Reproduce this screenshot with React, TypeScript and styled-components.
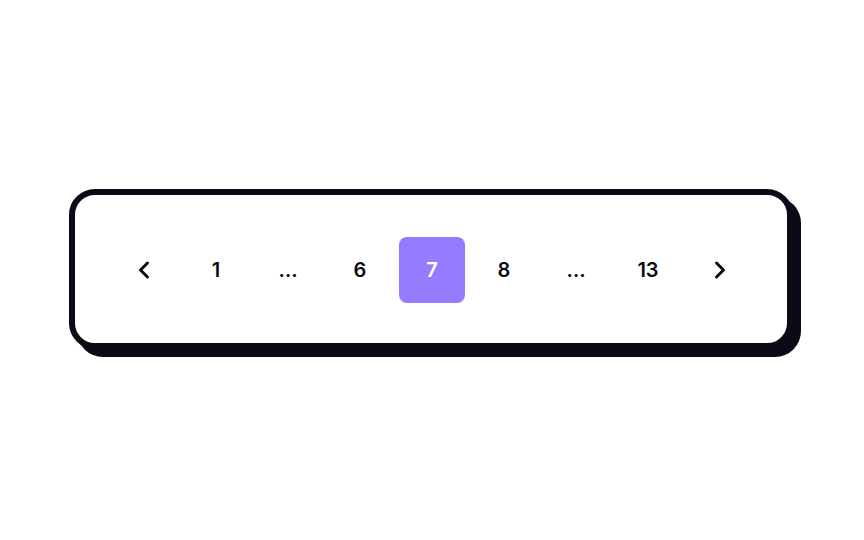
import styled, { createGlobalStyle } from "styled-components";

const GlobalStyle = createGlobalStyle`
    html, body {
        margin: 0;
        padding: 0;
        background: #ffffff;
    }
    body {
        font-family: Inter, "Noto Sans", sans-serif;
    }
`;

const Page = styled.div`
    width: 864px;
    height: 540px;
    display: flex;
    align-items: center;
    justify-content: center;
    padding-bottom: 2px;
    box-sizing: border-box;
`;

const Card = styled.nav`
    width: 724px;
    height: 160px;
    box-sizing: border-box;
    border: 6px solid #0b0a17;
    border-radius: 26px;
    box-shadow: 8px 8px 0 #0b0a17;
    background: #fff;
    display: flex;
    align-items: center;
    justify-content: center;
    padding: 2px 0 0 2px;
    margin-left: -2px;
`;

const List = styled.ul`
    list-style: none;
    margin: 0;
    padding: 0;
    display: flex;
    gap: 6px;
`;

const Item = styled.li<{ $active?: boolean }>`
    width: 66px;
    height: 66px;
    display: flex;
    align-items: center;
    justify-content: center;
    border-radius: 8px;
    font-size: 20px;
    font-weight: 600;
    color: ${(p) => (p.$active ? "#ffffff" : "#0b0a17")};
    background: ${(p) => (p.$active ? "#977bff" : "transparent")};
    cursor: pointer;
`;

function Chevron({ dir }: { dir: "left" | "right" }) {
    const d = dir === "left" ? "M15.5 5 L8.5 12 L15.5 19" : "M8.5 5 L15.5 12 L8.5 19";
    return (
        <svg width="24" height="24" viewBox="0 0 24 24" fill="none">
            <path d={d} stroke="#0b0a17" strokeWidth="3" strokeLinecap="round" strokeLinejoin="round" />
        </svg>
    );
}

const pages = ["1", "...", "6", "7", "8", "...", "13"];

function App() {
    return (
        <>
            <GlobalStyle />
            <Page>
                <Card>
                    <List>
                        <Item>
                            <Chevron dir="left" />
                        </Item>
                        {pages.map((p, i) => (
                            <Item key={i} $active={p === "7"}>
                                {p === "..." ? "…" : p}
                            </Item>
                        ))}
                        <Item>
                            <Chevron dir="right" />
                        </Item>
                    </List>
                </Card>
            </Page>
        </>
    );
}

export default App;
